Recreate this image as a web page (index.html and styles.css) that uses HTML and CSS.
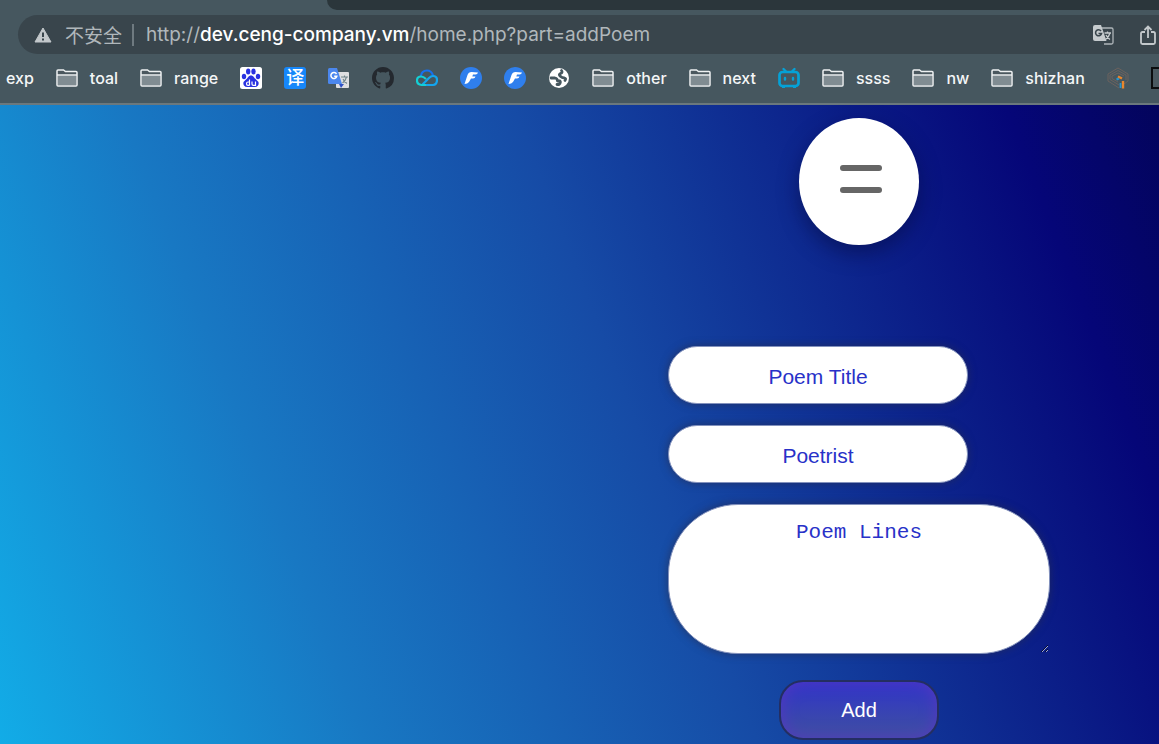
FILE: index.html
```html
<!DOCTYPE html>
<html lang="en">
<head>
<meta charset="utf-8">
<title>Add Poem</title>
<link rel="stylesheet" href="styles.css">
</head>
<body>
<svg class="defs" aria-hidden="true">
  <symbol id="folder" viewBox="0 0 22 18">
    <path d="M1 16V2Q1 1 2 1H7.500L9.500 2.500H20Q21 2.500 21 3.500V16Q21 17 20 17H2Q1 17 1 16Z" fill="#4a575e" stroke="#eef1f2" stroke-width="1.500"/>
    <path d="M2 6.500H20V16H2Z" fill="#808c92"/>
    <path d="M1 6H21" stroke="#eef1f2" stroke-width="1.500"/>
  </symbol>
  <symbol id="flash" viewBox="0 0 22 22">
    <circle cx="11" cy="11" r="11" fill="#2f7fed"/>
    <path d="M4.500 17L7.500 8Q8.500 5 11.500 5L18 5.500Q17.500 7.500 15.500 7.500H13L12.300 9.500H15.500Q15 11.500 13 11.500H11L9 15Q7.500 17 4.500 17Z" fill="#fff"/>
  </symbol>
</svg>
<header class="browser">
  <div class="tabs"><div class="tab-rest"></div></div>
  <div class="address">
    <svg class="warn" viewBox="0 0 18 16"><path d="M9 1L17 15H1Z" fill="#c3c8cb" stroke="#c3c8cb" stroke-linejoin="round"/><path d="M9 5.500V10M9 11.500V13.500" stroke="#39454c" stroke-width="2"/></svg>
    <span class="insecure">不安全</span>
    <span class="rule"></span>
    <span class="url">http://<b>dev.ceng-company.vm</b>/home.php?part=addPoem</span>
    <button class="tool" aria-label="Translate this page"><svg width="21" height="20" viewBox="0 0 21 20"><path d="M8 3H18.500Q20 3 20 4.500V17.500Q20 19 18.500 19H11" fill="none" stroke="#aeb5b9" stroke-width="1.300"/><path d="M2 0H8L13.500 16H2Q0 16 0 14V2Q0 0 2 0Z" fill="#c6cbce"/><path d="M8 6A3 3 0 1 0 8.500 8.500H5.500" fill="none" stroke="#39454c" stroke-width="1.600"/><path d="M11.500 8H18M14.500 6.500V8M17 8Q16 12 12.500 14.500M13 10Q14.500 13 17 14.500" fill="none" stroke="#c6cbce" stroke-width="1.300"/></svg></button>
    <button class="tool" aria-label="Share"><svg width="16" height="20" viewBox="0 0 16 20"><path d="M5 7H2.500Q1 7 1 8.500V17.500Q1 19 2.500 19H13.500Q15 19 15 17.500V8.500Q15 7 13.500 7H11M8 13V1.500M4.500 5L8 1.500L11.500 5" fill="none" stroke="#c3c8cb" stroke-width="1.800"/></svg></button>
  </div>
  <nav class="bookmarks" aria-label="Bookmarks">
    <a href="#">exp</a>
    <a href="#"><svg class="folder"><use href="#folder"/></svg>toal</a>
    <a href="#"><svg class="folder"><use href="#folder"/></svg>range</a>
    <a href="#" aria-label="Baidu"><svg class="icon" viewBox="0 0 22 22"><rect width="22" height="22" rx="2.500" fill="#fff"/><g fill="#2932e1"><ellipse cx="4" cy="9.500" rx="2.200" ry="2.700"/><ellipse cx="8.200" cy="4.500" rx="2.200" ry="3"/><ellipse cx="13.500" cy="4.500" rx="2.200" ry="3"/><ellipse cx="18" cy="9.500" rx="2.200" ry="2.700"/><path d="M11 8.500C13.500 8.500 14 11 16 12.500Q20 15.500 18 18.500Q16.500 20.500 13.500 20H8.500Q5.500 20.500 4 18.500Q2 15.500 6 12.500C8 11 8.500 8.500 11 8.500Z"/></g><path d="M9.500 12.500V18.500M9.500 15H8Q6.500 15 6.500 16.700Q6.500 18.300 8 18.300H9.500M12 14.500V17Q12 18.300 13.300 18.300H15.500V14.500" fill="none" stroke="#fff" stroke-width="1.200"/></svg></a>
    <a href="#" class="yi" aria-label="Translator"><span>译</span></a>
    <a href="#" aria-label="Google Translate"><svg class="icon" viewBox="0 0 22 22"><rect x="8" y="5" width="13" height="16" rx="1" fill="#dedfe1"/><path d="M11 17H16L13 21Z" fill="#3151c4"/><path d="M1.500 1H9L14 17H1.500Q0 17 0 15.500V2.500Q0 1 1.500 1Z" fill="#4b87ee"/><path d="M8.500 7A3 3 0 1 0 8.800 9.300H6.200" fill="none" stroke="#fff" stroke-width="1.500"/><path d="M13 10H20M16.500 8.500V10M18.500 10Q17.500 14 14.500 16M15 12Q16.500 15 19 16.500" fill="none" stroke="#71858b" stroke-width="1.100"/></svg></a>
    <a href="#" aria-label="GitHub"><svg class="icon" viewBox="0 0 16 16"><path fill="#24292f" d="M8 0C3.580 0 0 3.580 0 8c0 3.540 2.290 6.530 5.470 7.590.4.070.55-.17.55-.38 0-.19-.01-.82-.01-1.490-2.010.37-2.530-.49-2.690-.94-.09-.23-.48-.94-.82-1.130-.28-.15-.68-.52-.01-.53.63-.01 1.080.58 1.230.82.72 1.210 1.870.87 2.330.66.07-.52.28-.87.51-1.070-1.780-.2-3.640-.89-3.640-3.950 0-.87.31-1.590.82-2.150-.08-.2-.36-1.020.08-2.120 0 0 .67-.21 2.200.82.640-.18 1.320-.27 2-.27s1.360.09 2 .27c1.530-1.040 2.200-.82 2.200-.82.44 1.100.16 1.920.08 2.120.51.560.82 1.270.82 2.150 0 3.070-1.870 3.750-3.650 3.950.29.250.54.730.54 1.480 0 1.070-.01 1.930-.01 2.200 0 .21.150.46.550.38A8 8 0 0 0 16 8c0-4.420-3.580-8-8-8z"/></svg></a>
    <a href="#" aria-label="Cloud"><svg class="icon" viewBox="0 0 22 22"><g fill="none" stroke-width="2.200"><path d="M5 9Q5.500 3.500 11 3.500Q15.500 3.500 17 8.500" stroke="#1670f0"/><path d="M6 18H17Q21 17.500 21 13Q21 9 17 9Q15 9 13 11L6.500 17.500" stroke="#14a5ef"/><path d="M10 18H5.500Q1 17.500 1 13.500Q1 9.500 5 9.500Q7.500 9.500 10 12" stroke="#13d0d6"/></g></svg></a>
    <a href="#" aria-label="Flash"><svg class="icon"><use href="#flash"/></svg></a>
    <a href="#" aria-label="Flash two"><svg class="icon"><use href="#flash"/></svg></a>
    <a href="#" aria-label="Globe"><svg class="icon" viewBox="0 0 22 22"><circle cx="11" cy="11" r="10" fill="#fff"/><g fill="none" stroke="#46575f" stroke-linecap="round" stroke-linejoin="round"><path d="M13.500 3.500Q15 5.500 12.500 6.500Q10.500 7.500 12 9Q14 11 16.500 11Q18.500 11.500 17 13.500" stroke-width="2.800"/><path d="M3 11H7Q9.500 11.500 9.500 14H12Q13 15.500 11 17.500H9" stroke-width="2.800"/></g></svg></a>
    <a href="#"><svg class="folder"><use href="#folder"/></svg>other</a>
    <a href="#"><svg class="folder"><use href="#folder"/></svg>next</a>
    <a href="#" aria-label="Video"><svg class="icon" viewBox="0 0 22 22"><rect x="1.500" y="5" width="19" height="14" rx="3" fill="none" stroke="#05a1d6" stroke-width="2.700"/><path d="M5.500 2L8 4.500M16.500 2L14 4.500M7 11V12.500M15 11V12.500" stroke="#05a1d6" stroke-width="2.400" stroke-linecap="round"/><path d="M4 20.500H7M15 20.500H18" stroke="#05a1d6"/></svg></a>
    <a href="#"><svg class="folder"><use href="#folder"/></svg>ssss</a>
    <a href="#"><svg class="folder"><use href="#folder"/></svg>nw</a>
    <a href="#"><svg class="folder"><use href="#folder"/></svg>shizhan</a>
    <a href="#" aria-label="Maze"><svg class="icon" viewBox="0 0 22 22"><g fill="none" stroke="#6b625e" stroke-width="1"><path d="M12 21L1 14V7L11 1L21 7V14L17 17M12 18L3 12.500V8L11 3.500L19 8V13M11 15L5 11.500V9L11 6L17 9"/></g><path d="M16 14V21.500" stroke="#e9862c" stroke-width="2.400"/><path d="M13.500 16V21" stroke="#2595cf" stroke-width="1.800"/><path d="M9.500 12.500L12 11.500" stroke="#2595cf" stroke-width="2.400"/><path d="M11 9.500L15 11.500" stroke="#e9862c" stroke-width="2.500"/></svg></a>
    <a href="#" aria-label="More"><svg class="icon" viewBox="0 0 22 22"><rect x="1" y="1" width="20" height="20" fill="#4a5960" stroke="#0b0d0e" stroke-width="2"/></svg></a>
  </nav>
</header>
<main class="page">
  <form class="poem">
    <button type="button" class="menu" aria-label="Menu"><span></span><span></span></button>
    <input class="field" type="text" placeholder="Poem Title" aria-label="Poem Title">
    <input class="field" type="text" placeholder="Poetrist" aria-label="Poetrist">
    <textarea class="field lines" placeholder="Poem Lines" aria-label="Poem Lines"></textarea>
    <button type="submit" class="add">Add</button>
  </form>
</main>
</body>
</html>
```
FILE: styles.css
```css
* { box-sizing: border-box; }
body {
  margin: 0;
  min-height: 100vh;
  display: flex;
  flex-direction: column;
  overflow: hidden;
  font-family: "Liberation Sans", Arial, sans-serif;
}
button { border: 0; padding: 0; background: none; }
.defs { display: none; }
.browser {
  background: #46575f;
  border-bottom: 2px solid #6b787d;
  color: #f4f6f7;
  font-family: Inter, "Noto Sans CJK SC", sans-serif;
  overflow: hidden;
}
.tabs { padding-left: 327px; }
.tab-rest { height: 10px; background: #2b363b; border-bottom-left-radius: 10px; }
.address {
  display: flex;
  align-items: center;
  height: 39px;
  margin: 5px -40px 0 18px;
  padding: 0 43px 0 16px;
  border-radius: 20px;
  background: #39454c;
  color: #b0b7bb;
  font-size: 19px;
  white-space: nowrap;
}
.warn { width: 18px; height: 16px; margin-right: 13px; }
.rule { width: 2px; height: 22px; margin: 0 12px 0 10px; background: #6f7a80; }
.url { flex: 1; }
.url b { color: #fff; font-weight: 500; }
.tool { display: flex; margin-left: 26px; }
.bookmarks {
  display: flex;
  align-items: center;
  gap: 22px;
  height: 49px;
  padding: 0 0 2px 6px;
  font-size: 16px;
  font-weight: 500;
}
.bookmarks a {
  display: flex;
  flex: none;
  align-items: center;
  gap: 12px;
  color: inherit;
  text-decoration: none;
}
.folder { width: 22px; height: 18px; }
.icon { width: 22px; height: 22px; }
.yi span {
  width: 22px;
  height: 22px;
  border-radius: 3px;
  background: #1687fa;
  color: #fff;
  font-size: 18px;
  line-height: 21px;
  text-align: center;
}
.page {
  flex: 1;
  display: flex;
  justify-content: flex-end;
  padding: 13px 109px 4px 20px;
  background: linear-gradient(69deg, #12ace7 0%, #1878c3 26%, #164ba6 54%, #050678 89%, #03045c 100%);
}
.poem { display: flex; flex-direction: column; width: 382px; }
.menu {
  display: flex;
  flex-direction: column;
  align-items: center;
  justify-content: center;
  gap: 16px;
  align-self: center;
  width: 120px;
  height: 127px;
  margin-bottom: 101px;
  padding: 0 0 6px 4px;
  border-radius: 50%;
  background: #fff;
  box-shadow: 0 8px 20px rgba(5, 10, 60, .5);
}
.menu span { width: 42px; height: 6px; border-radius: 3px; background: #666; }
.field {
  width: 300px;
  height: 58px;
  margin: 0 0 21px;
  padding: 3px 20px 0;
  border: 1px solid #8291bd;
  border-radius: 29px;
  outline: 0;
  background: #fff;
  color: #2831c8;
  box-shadow: 0 0 8px rgba(40, 45, 80, .7);
  font: 21px "Liberation Sans", Arial, sans-serif;
  text-align: center;
}
.field::placeholder { color: #2831c8; opacity: 1; }
.lines {
  width: 382px;
  height: 150px;
  margin-bottom: 26px;
  padding-top: 16px;
  border-radius: 70px;
  font-family: "Liberation Mono", "Courier New", monospace;
}
.add {
  align-self: center;
  width: 160px;
  height: 60px;
  border: 2px solid #242e62;
  border-radius: 24px;
  background: linear-gradient(#3034c8, #3f50a0);
  box-shadow: inset 0 0 16px #5638c0;
  color: #fff;
  font: 20px "Liberation Sans", Arial, sans-serif;
}
```
